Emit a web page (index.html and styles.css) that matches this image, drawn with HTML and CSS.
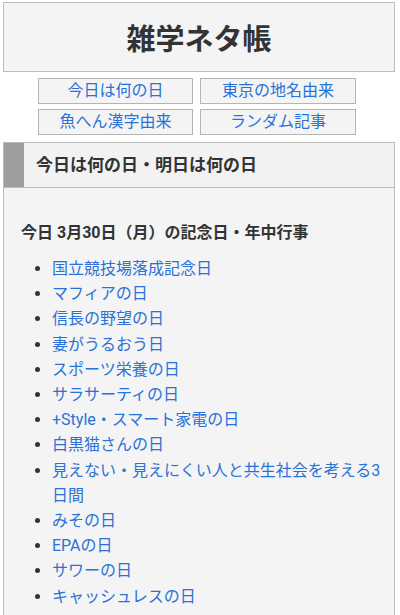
FILE: index.html
```html
<!DOCTYPE html>
<html lang="ja">
<head>
<meta charset="utf-8">
<title>雑学ネタ帳</title>
<link rel="stylesheet" href="styles.css">
</head>
<body>
<div class="page">
  <header class="site-header">
    <h1 class="site-title">雑学ネタ帳</h1>
  </header>
  <nav class="nav">
    <a class="nav-btn" href="#">今日は何の日</a>
    <a class="nav-btn" href="#">東京の地名由来</a>
    <a class="nav-btn" href="#">魚へん漢字由来</a>
    <a class="nav-btn" href="#">ランダム記事</a>
  </nav>
  <section class="section">
    <div class="section-head">
      <div class="section-bar"></div>
      <h2 class="section-title">今日は何の日・明日は何の日</h2>
    </div>
    <div class="section-body">
      <h3 class="day-title">今日 3月30日（月）の記念日・年中行事</h3>
      <ul class="events">
        <li><a href="#">国立競技場落成記念日</a></li>
        <li><a href="#">マフィアの日</a></li>
        <li><a href="#">信長の野望の日</a></li>
        <li><a href="#">妻がうるおう日</a></li>
        <li><a href="#">スポーツ栄養の日</a></li>
        <li><a href="#">サラサーティの日</a></li>
        <li><a href="#">+Style・スマート家電の日</a></li>
        <li><a href="#">白黒猫さんの日</a></li>
        <li><a href="#">見えない・見えにくい人と共生社会を考える3日間</a></li>
        <li><a href="#">みその日</a></li>
        <li><a href="#">EPAの日</a></li>
        <li><a href="#">サワーの日</a></li>
        <li><a href="#">キャッシュレスの日</a></li>
      </ul>
    </div>
  </section>
</div>
</body>
</html>
```

FILE: styles.css
```css
* { box-sizing: border-box; }
html, body { margin: 0; padding: 0; background: #fff; }
body {
  font-family: Roboto, "Noto Sans CJK JP", sans-serif;
  color: #333;
}
.page {
  padding: 2px 5px 0 3px;
}
.site-header {
  height: 70px;
  border: 1px solid #bdbdbd;
  background: #f4f4f4;
  display: flex;
  align-items: center;
  justify-content: center;
}
.site-title {
  margin: 0;
  font-size: 29px;
  font-weight: 700;
  color: #333;
  line-height: 1;
  padding-top: 6px;
}
.nav {
  display: grid;
  grid-template-columns: 155px 156px;
  column-gap: 7px;
  row-gap: 5px;
  justify-content: center;
  margin: 6px 0 0 -4px;
}
.nav-btn {
  height: 26px;
  border: 1px solid #b4b4b4;
  background: #f4f4f4;
  color: #2a72d8;
  text-decoration: none;
  font-size: 16px;
  display: flex;
  align-items: center;
  justify-content: center;
  line-height: 1;
}
.section {
  margin-top: 7px;
  border: 1px solid #bdbdbd;
  border-bottom: none;
  background: #f4f4f4;
  min-height: 480px;
}
.section-head {
  display: flex;
  height: 45px;
  border-bottom: 1px solid #bdbdbd;
  background: #f2f2f2;
}
.section-bar {
  width: 20px;
  background: #9e9e9e;
}
.section-title {
  margin: 0 0 0 12px;
  align-self: center;
  font-size: 17px;
  font-weight: 700;
  color: #333;
  line-height: 1;
  padding-top: 1px;
}
.section-body {
  padding: 32px 10px 0 17px;
}
.day-title {
  margin: 0;
  font-size: 16px;
  font-weight: 700;
  line-height: 25px;
  color: #333;
}
.events {
  margin: 11px 0 0 0;
  padding-left: 31px;
  list-style: disc;
}
.events li {
  font-size: 16px;
  line-height: 25.2px;
  color: #333;
}
.events a {
  color: #2a72d8;
  text-decoration: none;
}
```
